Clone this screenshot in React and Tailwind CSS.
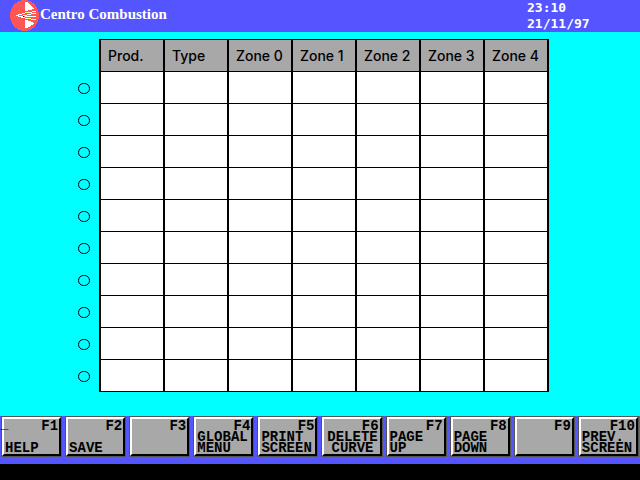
const columns = ["Prod.", "Type", "Zone 0", "Zone 1", "Zone 2", "Zone 3", "Zone 4"];
const rows = Array.from({ length: 10 }, (_, i) => i + 1);

const keys = [
  { id: "F1", label: "HELP", low: true, cursor: true },
  { id: "F2", label: "SAVE", low: true },
  { id: "F3", label: "" },
  { id: "F4", label: "GLOBAL\nMENU" },
  { id: "F5", label: "PRINT\nSCREEN" },
  { id: "F6", label: "DELETE\nCURVE", center: true },
  { id: "F7", label: "PAGE\nUP" },
  { id: "F8", label: "PAGE\nDOWN" },
  { id: "F9", label: "" },
  { id: "F10", label: "PREV.\nSCREEN" },
];

function Logo() {
  return (
    <svg viewBox="0 0 30 32" className="h-8 w-[30px] shrink-0" shapeRendering="crispEdges" aria-hidden="true">
      <ellipse cx="14.5" cy="15.5" rx="14.5" ry="15.5" fill="#ff5555" />
      <path d="M15 2h2l2 2 3 2 2 3-4 1-5 1zM15 20l5 1 4 2-2 2-3 2-2 1h-2z" fill="#fff" />
      <path
        d="M6 15h3v1h-3zM8 14h4v1h-4zM8 16h5v1h-5zM12 13h3v1h-3zM18 12h4v1h-4zM22 11h4v1h-4zM13 15h4v1h-4zM17 14h4v1h-4zM21 13h5v1h-5zM15 16h11v1h-11zM11 17h4v1h-4zM15 18h3v1h-3zM21 19h5v1h-5z"
        fill="#fff"
      />
      <path d="M15 12h3v1h-3zM18 18h3v1h-3z" fill="#ffff55" />
      <path d="M13 16h1v1h-1z" fill="#000" />
    </svg>
  );
}

function FunctionKey({ item }) {
  return (
    <button type="button" className="h-[41px] min-w-0 flex-1 border border-[#555] bg-[#a8a8a8] text-left">
      <span className="flex h-full flex-col border-2 border-t-white border-r-black border-b-black border-l-white">
        <span className="flex items-start justify-between pt-px pr-px leading-3">
          <span className="-ml-1 leading-2">{item.cursor ? "_" : ""}</span>
          <span>{item.id}</span>
        </span>
        <span
          className={`flex flex-1 flex-col justify-end pl-px leading-[11px] whitespace-pre ${item.center ? "text-center" : ""}`}
        >
          {item.label}
        </span>
      </span>
    </button>
  );
}

export default function App() {
  return (
    <div className="min-h-screen bg-black">
      <header className="flex h-8 items-start bg-[#5555ff] pl-[10px] text-white">
        <Logo />
        <h1 className="flex-1 pt-1 font-['Liberation_Serif',serif] text-[15px] leading-5 font-bold">
          Centro Combustion
        </h1>
        <div className="w-[113px] font-['DejaVu_Sans_Mono',monospace] text-[13px] leading-4 font-bold">
          <div>23:10</div>
          <div>21/11/97</div>
        </div>
      </header>

      <main className="flex items-start gap-[9px] bg-[#00ffff] pt-[7px] pr-[91px] pb-6 pl-[78px]">
        <div className="flex flex-col pt-[33px]">
          {rows.map((row) => (
            <label key={row} className="flex h-8 items-center">
              <input
                type="radio"
                name="product"
                aria-label={`Row ${row}`}
                className="block h-[11px] w-3 appearance-none rounded-full border border-black checked:bg-black"
              />
            </label>
          ))}
        </div>
        <div className="flex-1">
          <table className="w-full table-fixed border-separate border-spacing-0 border-t border-l-2 border-black bg-white">
            <thead>
              <tr>
                {columns.map((name) => (
                  <th
                    key={name}
                    scope="col"
                    className="h-8 border-r-2 border-b border-black bg-[#a8a8a8] p-0 pl-[7px] text-left font-['Inter',sans-serif] text-[14px] leading-5 font-medium whitespace-nowrap text-black"
                  >
                    {name}
                  </th>
                ))}
              </tr>
            </thead>
            <tbody>
              {rows.map((row) => (
                <tr key={row}>
                  {columns.map((name) => (
                    <td key={name} className="h-8 border-r-2 border-b border-black p-0" />
                  ))}
                </tr>
              ))}
            </tbody>
          </table>
        </div>
      </main>

      <footer className="flex gap-[3px] bg-[#5555ff] px-px pb-[7px] font-['Liberation_Mono',monospace] text-[14px] font-bold text-black">
        {keys.map((item) => (
          <FunctionKey key={item.id} item={item} />
        ))}
      </footer>
    </div>
  );
}
